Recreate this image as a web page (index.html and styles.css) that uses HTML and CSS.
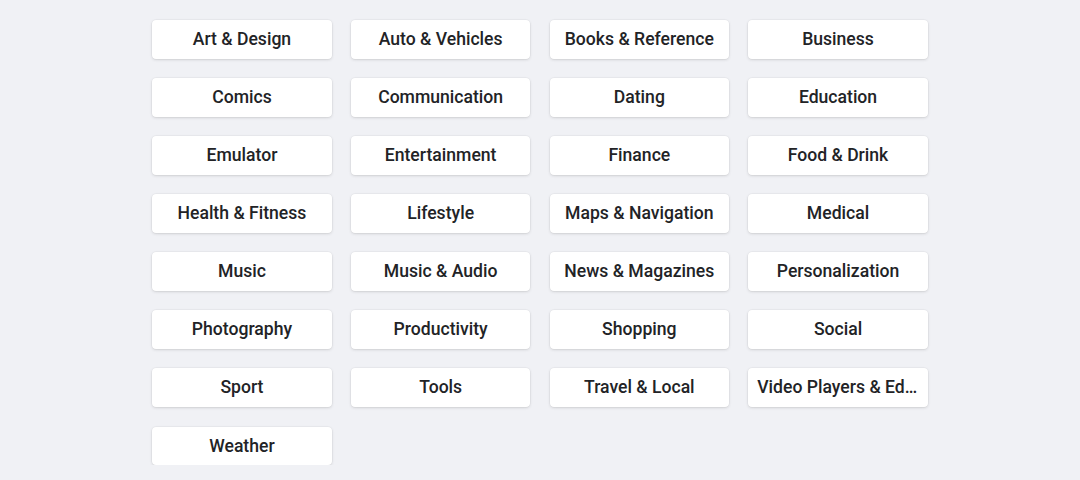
FILE: index.html
```html
<!DOCTYPE html>
<html>
<head>
<meta charset="utf-8">
<link rel="stylesheet" href="styles.css">
</head>
<body>
<div class="grid">
  <div class="cat">Art &amp; Design</div>
  <div class="cat">Auto &amp; Vehicles</div>
  <div class="cat">Books &amp; Reference</div>
  <div class="cat">Business</div>
  <div class="cat">Comics</div>
  <div class="cat">Communication</div>
  <div class="cat">Dating</div>
  <div class="cat">Education</div>
  <div class="cat">Emulator</div>
  <div class="cat">Entertainment</div>
  <div class="cat">Finance</div>
  <div class="cat">Food &amp; Drink</div>
  <div class="cat">Health &amp; Fitness</div>
  <div class="cat">Lifestyle</div>
  <div class="cat">Maps &amp; Navigation</div>
  <div class="cat">Medical</div>
  <div class="cat">Music</div>
  <div class="cat">Music &amp; Audio</div>
  <div class="cat">News &amp; Magazines</div>
  <div class="cat">Personalization</div>
  <div class="cat">Photography</div>
  <div class="cat">Productivity</div>
  <div class="cat">Shopping</div>
  <div class="cat">Social</div>
  <div class="cat">Sport</div>
  <div class="cat">Tools</div>
  <div class="cat">Travel &amp; Local</div>
  <div class="cat">Video Players &amp; Editors</div>
  <div class="cat">Weather</div>
</div>
</body>
</html>
```
FILE: styles.css
```css
html, body {
  margin: 0;
  padding: 0;
  background: #f0f1f5;
}
body {
  font-family: Roboto, "Liberation Sans", sans-serif;
  padding-top: 20px;
}
.grid {
  width: 775.6px;
  margin: 0 auto;
  display: grid;
  grid-template-columns: repeat(4, 179.5px);
  column-gap: 19.2px;
  row-gap: 19.4px;
}
.cat {
  box-sizing: border-box;
  height: 38.7px;
  background: #ffffff;
  border-radius: 4px;
  box-shadow: 0 0 0 0.5px rgba(0, 0, 0, 0.05), 0 1px 3px rgba(0, 0, 0, 0.12);
  display: flex;
  align-items: center;
  justify-content: center;
  font-size: 17.6px;
  font-weight: 500;
  color: #222326;
  padding: 0 9px;
  white-space: nowrap;
  overflow: hidden;
}
.cat {
  display: block;
  line-height: 38.7px;
  text-align: center;
  text-overflow: ellipsis;
}
```
